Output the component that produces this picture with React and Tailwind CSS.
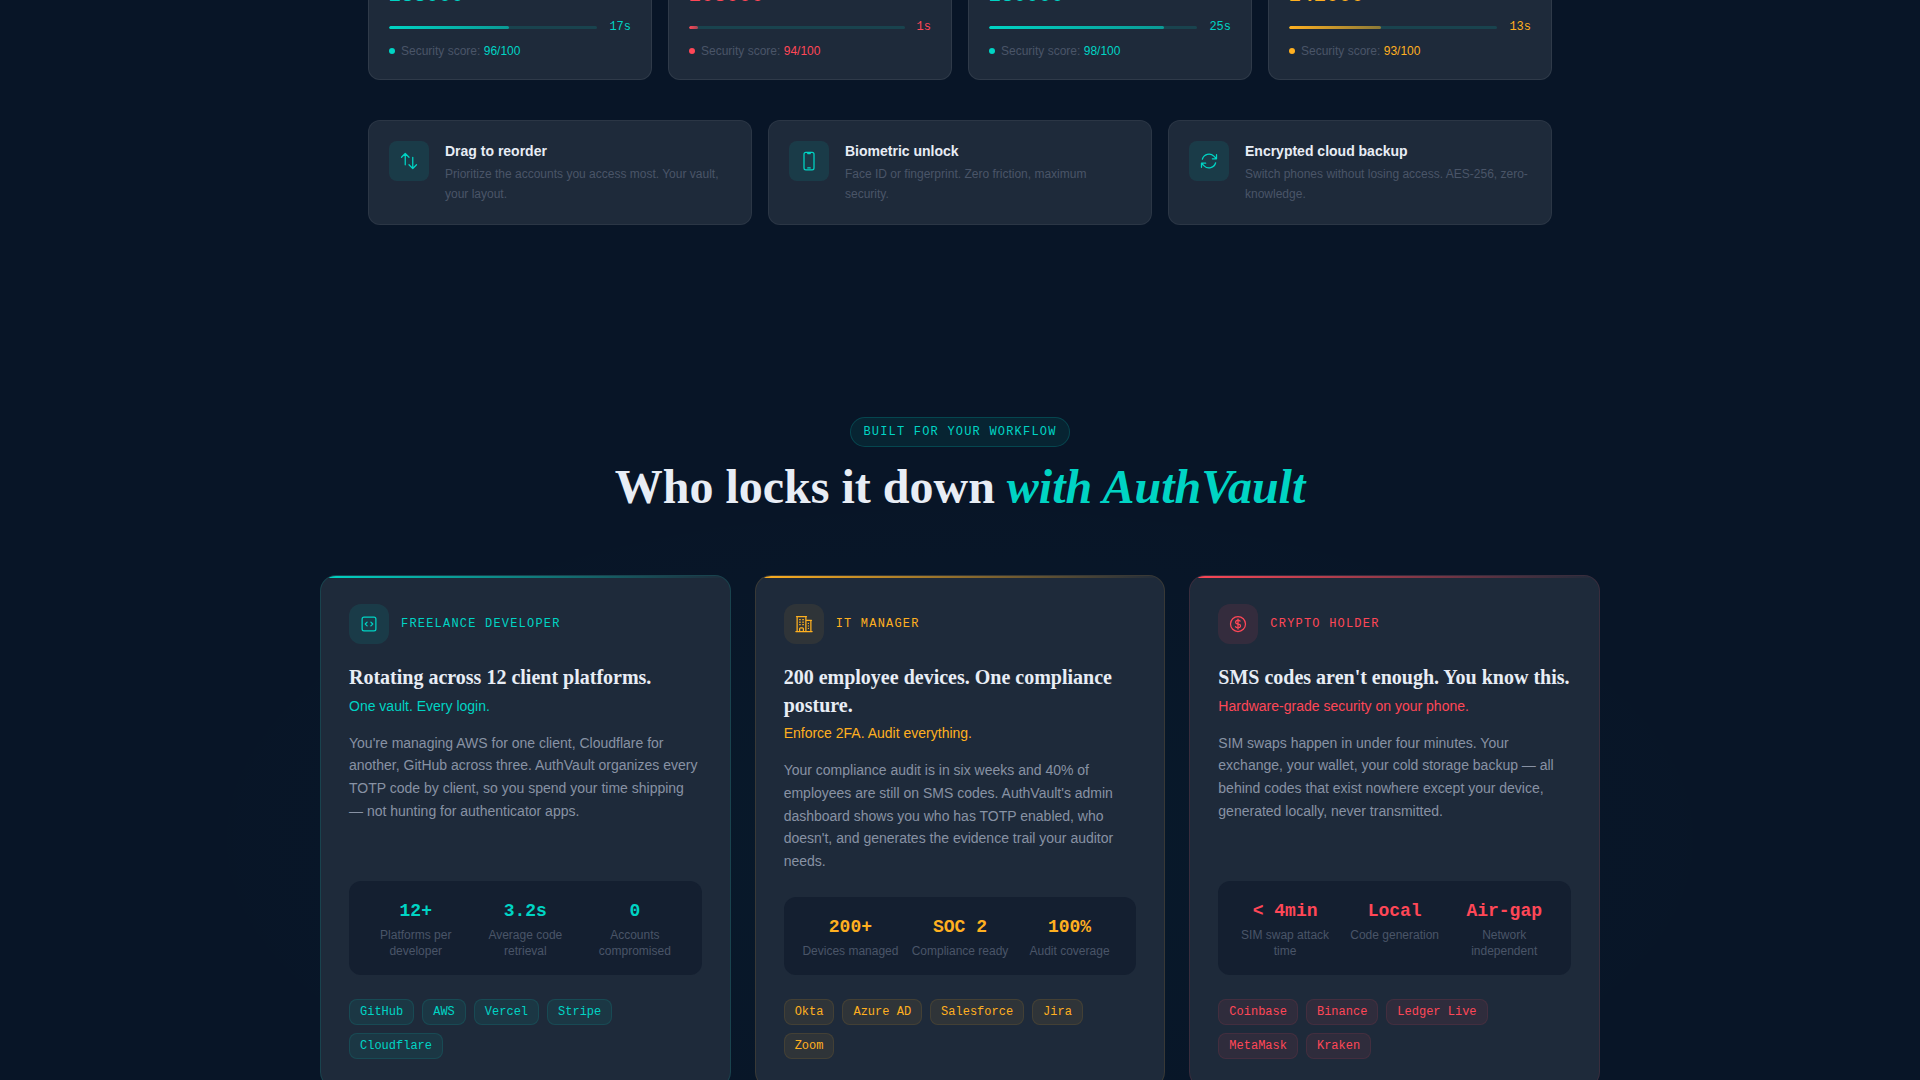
import {
  HiOutlineArrowsUpDown,
  HiOutlineDevicePhoneMobile,
  HiOutlineArrowPath,
  HiOutlineBuildingOffice2,
  HiOutlineCurrencyDollar,
} from "react-icons/hi2";

function CodeSquareIcon({ className }) {
  return (
    <svg viewBox="0 0 24 24" fill="none" stroke="currentColor" strokeWidth="1.5" strokeLinecap="round" strokeLinejoin="round" className={className} aria-hidden="true">
      <path d="M14.25 9.75 16.5 12l-2.25 2.25m-4.5 0L7.5 12l2.25-2.25M6 20.25h12A2.25 2.25 0 0 0 20.25 18V6A2.25 2.25 0 0 0 18 3.75H6A2.25 2.25 0 0 0 3.75 6v12A2.25 2.25 0 0 0 6 20.25Z" />
    </svg>
  );
}

const tones = {
  teal: {
    text: "text-[#00d4c4]",
    dot: "bg-[#00d4c4]",
    bar: "bg-gradient-to-r from-[#00d4c4] to-[#00d4c4]/60",
    card: "border-[#00d4c4]/15",
    line: "bg-gradient-to-r from-[#00d4c4] to-transparent",
    icon: "bg-[#00d4c4]/10",
    tag: "border-[#00d4c4]/12 bg-[#00d4c4]/8",
  },
  amber: {
    text: "text-[#ffb020]",
    dot: "bg-[#ffb020]",
    bar: "bg-gradient-to-r from-[#ffb020] to-[#ffb020]/50",
    card: "border-[#ffb020]/12",
    line: "bg-gradient-to-r from-[#ffb020] to-transparent",
    icon: "bg-[#ffb020]/8",
    tag: "border-[#ffb020]/10 bg-[#ffb020]/8",
  },
  red: {
    text: "text-[#ff4757]",
    dot: "bg-[#ff4757]",
    bar: "bg-gradient-to-r from-[#ff4757] to-[#ff4757]/60",
    card: "border-[#ff4757]/12",
    line: "bg-gradient-to-r from-[#ff4757] to-transparent",
    icon: "bg-[#ff4757]/10",
    tag: "border-[#ff4757]/10 bg-[#ff4757]/8",
  },
};

const codes = [
  { tone: "teal", code: "283000", seconds: 17, progress: 57.5, score: "96/100" },
  { tone: "red", code: "203000", seconds: 1, progress: 4, score: "94/100" },
  { tone: "teal", code: "280000", seconds: 25, progress: 84, score: "98/100" },
  { tone: "amber", code: "242000", seconds: 13, progress: 44, score: "93/100" },
];

const features = [
  { Icon: HiOutlineArrowsUpDown, title: "Drag to reorder", text: "Prioritize the accounts you access most. Your vault, your layout." },
  { Icon: HiOutlineDevicePhoneMobile, title: "Biometric unlock", text: "Face ID or fingerprint. Zero friction, maximum security." },
  { Icon: HiOutlineArrowPath, title: "Encrypted cloud backup", text: "Switch phones without losing access. AES-256, zero-knowledge." },
];

const personas = [
  {
    tone: "teal",
    Icon: CodeSquareIcon,
    role: "Freelance Developer",
    title: "Rotating across 12 client platforms.",
    tagline: "One vault. Every login.",
    text: "You're managing AWS for one client, Cloudflare for another, GitHub across three. AuthVault organizes every TOTP code by client, so you spend your time shipping — not hunting for authenticator apps.",
    stats: [["12+", "Platforms per developer"], ["3.2s", "Average code retrieval"], ["0", "Accounts compromised"]],
    tags: ["GitHub", "AWS", "Vercel", "Stripe", "Cloudflare"],
  },
  {
    tone: "amber",
    Icon: HiOutlineBuildingOffice2,
    role: "IT Manager",
    title: "200 employee devices. One compliance posture.",
    tagline: "Enforce 2FA. Audit everything.",
    text: "Your compliance audit is in six weeks and 40% of employees are still on SMS codes. AuthVault's admin dashboard shows you who has TOTP enabled, who doesn't, and generates the evidence trail your auditor needs.",
    stats: [["200+", "Devices managed"], ["SOC 2", "Compliance ready"], ["100%", "Audit coverage"]],
    tags: ["Okta", "Azure AD", "Salesforce", "Jira", "Zoom"],
  },
  {
    tone: "red",
    Icon: HiOutlineCurrencyDollar,
    role: "Crypto Holder",
    title: "SMS codes aren't enough. You know this.",
    tagline: "Hardware-grade security on your phone.",
    text: "SIM swaps happen in under four minutes. Your exchange, your wallet, your cold storage backup — all behind codes that exist nowhere except your device, generated locally, never transmitted.",
    stats: [["< 4min", "SIM swap attack time"], ["Local", "Code generation"], ["Air-gap", "Network independent"]],
    tags: ["Coinbase", "Binance", "Ledger Live", "MetaMask", "Kraken"],
  },
];

const mono = "font-['Liberation_Mono',monospace]";
const serif = "font-['Liberation_Serif',serif]";

function CodeCard({ tone, code, seconds, progress, score }) {
  const t = tones[tone];
  return (
    <article className="rounded-xl border border-white/8 bg-[#1e2a3a] px-5 pb-5">
      <p className={`${mono} ${t.text} mb-2 text-xl leading-[30px] font-bold tracking-wide`}>{code}</p>
      <div className="mb-2 flex items-center gap-3">
        <div className="h-[3px] flex-1 overflow-hidden rounded-full bg-[#00d4c4]/15">
          <div className={`h-full rounded-full ${t.bar}`} style={{ width: `${progress}%` }} />
        </div>
        <span className={`${mono} ${t.text} text-xs`}>{seconds}s</span>
      </div>
      <div className="flex items-center gap-1.5 text-xs">
        <span className={`size-1.5 rounded-full ${t.dot}`} />
        <p className="text-[#4a5568]">
          Security score: <span className={t.text}>{score}</span>
        </p>
      </div>
    </article>
  );
}

function Feature({ Icon, title, text }) {
  return (
    <article className="flex items-start gap-4 rounded-xl border border-white/6 bg-[#1e2a3a] p-5">
      <div className="flex size-10 shrink-0 items-center justify-center rounded-lg bg-[#00d4c4]/10 text-[#00d4c4]">
        <Icon className="size-5" aria-hidden="true" />
      </div>
      <div>
        <h3 className="mb-1 text-sm font-bold text-[#e8edf5]">{title}</h3>
        <p className="text-xs leading-relaxed text-[#4a5568]">{text}</p>
      </div>
    </article>
  );
}

function Persona({ tone, Icon, role, title, tagline, text, stats, tags }) {
  const t = tones[tone];
  return (
    <article className={`relative flex flex-col overflow-hidden rounded-2xl border bg-[#1e2a3a] p-7 ${t.card}`}>
      <div className={`absolute inset-x-0 top-0 h-0.5 ${t.line}`} />
      <div className="mb-5 flex items-center gap-3">
        <div className={`flex size-10 items-center justify-center rounded-xl ${t.icon} ${t.text}`}>
          <Icon className="size-5" aria-hidden="true" />
        </div>
        <span className={`${mono} ${t.text} text-xs tracking-widest uppercase`}>{role}</span>
      </div>
      <h3 className={`${serif} mb-1 text-xl leading-snug font-bold text-[#e8edf5]`}>{title}</h3>
      <p className={`mb-4 text-sm ${t.text}`}>{tagline}</p>
      <p className="mb-6 text-sm leading-relaxed text-[#8892a4]">{text}</p>
      <dl className="mt-auto mb-6 grid grid-cols-3 gap-2 rounded-xl bg-[#141f30] p-4 text-center">
        {stats.map(([value, label]) => (
          <div key={label} className="flex flex-col-reverse justify-end gap-0.5">
            <dt className="text-xs text-[#4a5568]">{label}</dt>
            <dd className={`${mono} ${t.text} text-lg leading-7 font-bold`}>{value}</dd>
          </div>
        ))}
      </dl>
      <ul className="flex flex-wrap gap-2">
        {tags.map((tag) => (
          <li key={tag} className={`${mono} ${t.text} ${t.tag} rounded-lg border px-2.5 py-1 text-xs`}>{tag}</li>
        ))}
      </ul>
    </article>
  );
}

export default function App() {
  return (
    <div className="h-screen overflow-hidden bg-[#081527] font-['Liberation_Sans',sans-serif]">
      <main className="-mt-5">
        <section className="mx-auto max-w-7xl px-12 pb-24">
          <div className="mb-10 grid grid-cols-4 gap-4">
            {codes.map((c) => <CodeCard key={c.score} {...c} />)}
          </div>
          <div className="grid grid-cols-3 gap-4">
            {features.map((f) => <Feature key={f.title} {...f} />)}
          </div>
        </section>
        <section className="bg-[radial-gradient(ellipse_42%_42%_at_50%_60%,#00d4c406,transparent)] pt-24 pb-24">
          <header className="mb-16 text-center">
            <p className={`${mono} mx-auto mb-4 w-fit rounded-full border border-[#00d4c4]/20 bg-[#00d4c4]/8 px-3 py-1.5 text-xs tracking-widest text-[#00d4c4] uppercase`}>
              Built for your workflow
            </p>
            <h2 className={`${serif} text-5xl leading-none font-bold text-[#e8edf5]`}>
              Who locks it down <em className="text-[#00d4c4]">with AuthVault</em>
            </h2>
          </header>
          <div className="mx-auto grid max-w-7xl grid-cols-3 gap-6">
            {personas.map((p) => <Persona key={p.role} {...p} />)}
          </div>
        </section>
      </main>
    </div>
  );
}
